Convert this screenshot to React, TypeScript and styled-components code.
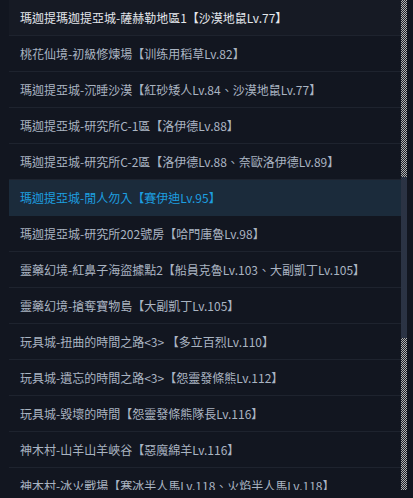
import React from "react";
import styled, { createGlobalStyle } from "styled-components";

const Global = createGlobalStyle`
  html, body {
    margin: 0;
    padding: 0;
    background: #121620;
  }
  body {
    font-family: "Noto Sans CJK TC", "Noto Sans", sans-serif;
  }
`;

const Frame = styled.div`
  display: flex;
  height: 490px;
  padding-left: 9px;
  padding-right: 6px;
  overflow: hidden;
`;

const List = styled.ul`
  flex: 1;
  margin: 0;
  padding: 0;
  list-style: none;
`;

type Tone = "normal" | "hover" | "active";

const Row = styled.li<{ $tone: Tone }>`
  display: flex;
  align-items: center;
  height: 35px;
  padding-left: 11px;
  border-bottom: 1px solid
    ${(p) => (p.$tone === "active" ? "#1b2b3b" : "#1e232e")};
  background: ${(p) =>
    p.$tone === "hover" ? "#161a24" : p.$tone === "active" ? "#1b2b3b" : "transparent"};
  color: ${(p) =>
    p.$tone === "hover" ? "#e4e7ec" : p.$tone === "active" ? "#1d9fe0" : "#aab4c2"};
  font-size: 12px;
  line-height: 16px;
  white-space: nowrap;
`;

const Track = styled.div`
  width: 6px;
  flex: none;
  height: 490px;
  background-image: repeating-conic-gradient(#b0b0b0 0% 25%, #1e222b 0% 50%);
  background-size: 2px 2px;
`;

const Thumb = styled.div`
  width: 6px;
  height: 161px;
  margin-top: 177px;
  background: #2b3344;
`;

const rows: string[] = [
  "瑪迦提瑪迦提亞城-薩赫勒地區1【沙漠地鼠Lv.77】",
  "桃花仙境-初級修煉場【训练用稻草Lv.82】",
  "瑪迦提亞城-沉睡沙漠【紅砂矮人Lv.84、沙漠地鼠Lv.77】",
  "瑪迦提亞城-研究所C-1區【洛伊德Lv.88】",
  "瑪迦提亞城-研究所C-2區【洛伊德Lv.88、奈歐洛伊德Lv.89】",
  "瑪迦提亞城-閒人勿入【賽伊迪Lv.95】",
  "瑪迦提亞城-研究所202號房【哈門庫魯Lv.98】",
  "靈藥幻境-紅鼻子海盜據點2【船員克魯Lv.103、大副凱丁Lv.105】",
  "靈藥幻境-搶奪寶物島【大副凱丁Lv.105】",
  "玩具城-扭曲的時間之路<3> 【多立百烈Lv.110】",
  "玩具城-遺忘的時間之路<3>【怨靈發條熊Lv.112】",
  "玩具城-毀壞的時間【怨靈發條熊隊長Lv.116】",
  "神木村-山羊山羊峽谷【惡魔綿羊Lv.116】",
  "神木村-冰火戰場【寒冰半人馬Lv.118、火焰半人馬Lv.118】",
];

export default function App() {
  return (
    <>
      <Global />
      <Frame>
        <List>
          {rows.map((r, i) => (
            <Row key={i} $tone={i === 0 ? "hover" : i === 5 ? "active" : "normal"}>
              {r}
            </Row>
          ))}
        </List>
        <Track>
          <Thumb />
        </Track>
      </Frame>
    </>
  );
}
